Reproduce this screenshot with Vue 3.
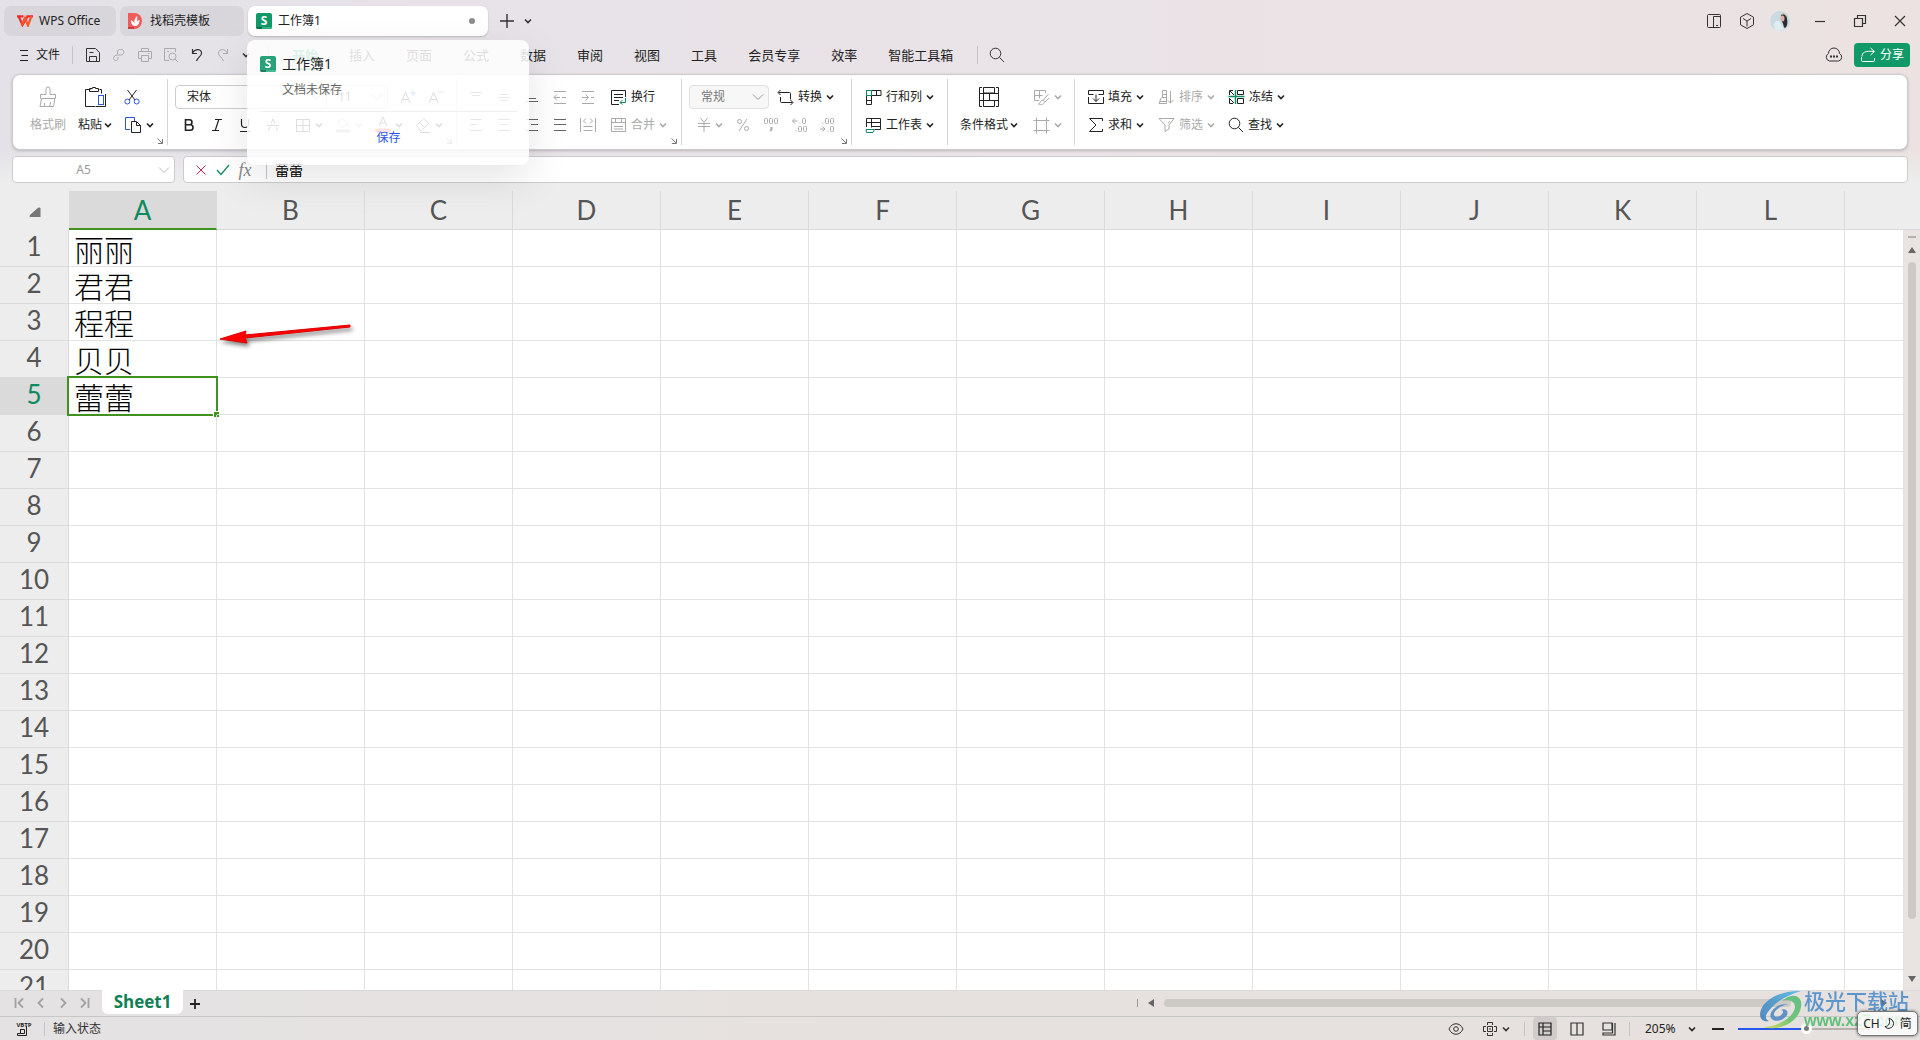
<script setup>
import { h } from 'vue'

const icons = {
  chev: [8, 8, '<path d="M1 2.5l3 3 3-3" stroke-width="1.6"/>'],
  arrow: [12, 8, '<path d="M1 1.5l5 5 5-5"/>'],
  launch: [6, 6, '<path d="M.5 .5l4.5 4.5M5.500 1v4.500H1"/>'],
  plus: [14, 14, '<path d="M7 0v14M0 7h14" stroke-width="1.4"/>'],
  wps: [16, 12, '<path d="M0 1.300h6.500M9.500 1.300H16M1.500 1l4 9L10.500 1.500" stroke="#ee2a2c" stroke-width="2.200"/><path d="M4.500 10.500L8 3l3 7.500L14.500 1" stroke="#f9562b" stroke-width="2.200"/>'],
  docer: [14, 16, '<path d="M0 0h6.500a7.500 8 0 0 1 0 16H0z" fill="#f15b5b" stroke="none"/><path d="M0 14h6v2H0z" fill="#c93c44" stroke="none"/><path d="M7 13c-3 0-4-3-4-6 2 1 3 2 3.500 3.500C6 7 7 5 9 3c.5 2 .5 3.500-.5 6C9.500 7.500 10.500 7 11.500 7c0 4-2 6-4.500 6z" fill="#fff" stroke="none"/>'],
  sheet: [16, 16, '<rect x="0" y="0" width="16" height="16" rx="2" fill="#12996a" stroke="none"/><path d="M0 14h6v2H2a2 2 0 0 1-2-2z" fill="#0a6e4b" stroke="none"/><path d="M6 14h10a2 2 0 0 1-2 2H6z" fill="#35b084" stroke="none"/><text x="8" y="12" text-anchor="middle" font-size="12" font-weight="700" font-family="Open Sans, sans-serif" fill="#fff" stroke="none">S</text>'],
  split: [16, 16, '<rect x="1.500" y="1.500" width="13" height="13" rx="1"/><path d="M7.500 14.500v-11h7M10 12.500h2"/>'],
  cube: [16, 16, '<path d="M8 .5l6.500 3.700v7.600L8 15.500l-6.500-3.700V4.200zM4 5.500L8 8l4-2.500M8 8v5.500"/>'],
  min: [12, 12, '<path d="M1 6.500h10" stroke-width="1.200"/>'],
  restore: [14, 14, '<path d="M1.500 4.500h8v8h-8zM4.500 4V1.500h8v8H10" stroke-width="1.200"/>'],
  close: [12, 12, '<path d="M1 1l10 10M11 1L1 11" stroke-width="1.200"/>'],
  burger: [10, 12, '<path d="M0 1.500h8M1.500 6.500H8M0 11.500h8"/>'],
  save: [16, 16, '<path d="M1.500 1.500h9l4 4v9h-13zM4.500 14V9.500h7V14M4.500 5.500h4"/>'],
  link: [14, 14, '<path d="M5.500 6V4a2.500 2.500 0 0 1 3-2.500c4-.5 4.500 4.500 1 5.500H5.500C3 7 1.500 8.500 1.500 10.500c.5 3 4.500 2.500 4.500 0V9"/>'],
  print: [16, 16, '<path d="M4.500 4.500v-3h7v3M4 11.500H1.500v-7h13v7H12M4.500 8.500h7v6h-7zM11 6.500h1.500"/>'],
  preview: [16, 16, '<path d="M6 13.500H1.500v-12h11V5M4 4.500h2"/><circle cx="9.500" cy="9.500" r="3.500"/><path d="M12 12l3 3"/>'],
  undo: [14, 14, '<path d="M2.500 1v4.500H7M2.500 5C5.500 0 12 1 11.500 5.500 11 8.500 8 9 6.500 13" stroke-width="1.200"/>'],
  redo: [14, 14, '<path d="M11.500 1v4.500H7M11.500 5C8.500 0 2 1 2.500 5.500 3 8.500 6 9 7.500 13"/>'],
  search: [16, 16, '<circle cx="6.500" cy="6.500" r="5.300"/><path d="M10.500 10.500l4.500 4.500"/>'],
  cloud: [18, 16, '<path d="M4.500 14a4 4 0 0 1-1-7.500 5.500 5.500 0 0 1 11 0 4 4 0 0 1-1 7.500z"/><path d="M5 9.500h2M8 9.500h2M11 9.500h2" stroke-width="2"/>'],
  share: [16, 16, '<path d="M1.500 10v3.500q0 1 1 1h11q1 0 1-1V11M2 9.500c0-4 3-6 12-5M10.500 1l4 3.500-4 3.500"/>'],
  brush: [20, 22, '<path d="M8 8.500V3a2 2 0 0 1 4 0v5.500h5.500v4h-15v-4H8M3.500 12.500L2 20.500h13.500q1-3 1-8M6.500 20v-3M11.500 20q1-1 1-4"/>'],
  paste: [22, 22, '<path d="M6.500 3.500h-5v17h10M15.500 3.500h2v4M5.500 5.500v-3h3v-1h3v1h3v3z"/><rect x="14.500" y="9.500" width="5" height="9" stroke="#2a56d8"/><path d="M12 20.500h9.500V8"/>'],
  cut: [16, 16, '<path d="M3.500 1l7.500 10M12.500 1L5 11"/><circle cx="3.300" cy="12.500" r="2.500" stroke="#2a56d8"/><circle cx="12.700" cy="12.500" r="2.500" stroke="#2a56d8"/>'],
  copy: [18, 18, '<path d="M6 13.500H1.500v-12h9V5" stroke="#2a56d8"/><path d="M7.500 5.500h5l4 4v7h-9zM12.500 6v3.500h4"/>'],
  bold: [14, 16, '<path d="M3.500 2.800h4a2.400 2.400 0 0 1 0 4.900h-4zM3.500 7.700h4.800a2.700 2.700 0 0 1 0 5.500H3.500z" stroke-width="1.600"/>'],
  italic: [14, 16, '<path d="M5 2.500h7M2 13.500h7M8.800 2.500L5.200 13.500" stroke-width="1.200"/>'],
  under: [14, 16, '<path d="M3.500 2v5a3.500 3.500 0 0 0 7 0V2M2 14.500h10" stroke-width="1.200"/>'],
  strike: [14, 16, '<path d="M1 8.500h12M5 6.500L7 2l2 4.500M4 10l-1.500 3.500M10 10l1.500 3.500"/>'],
  border: [16, 16, '<path d="M1.500 2.500h13v12h-13zM8 2.500v12M1.500 8.500h13"/>'],
  fill: [16, 16, '<path d="M7 1.500l5.500 5-5.500 4-4-4zM13 6v4"/><path d="M1 14h14" stroke-width="3"/>'],
  fcolor: [16, 18, '<path d="M4 10L8 1l4 9M5.500 7h5"/><path d="M2 14.500h12" stroke="#e8403c" stroke-width="4" stroke-linecap="round"/>'],
  eraser: [16, 16, '<path d="M1.500 8.500l7-7 5 5-7 7h-1.500zM4.500 5.500l5 5M5 15.500h10"/>'],
  aplus: [18, 16, '<path d="M2 14L6.500 3 11 14M3.500 10.500h6"/><path d="M11 4h6M14 1v6" stroke="#2a56d8"/>'],
  aminus: [18, 16, '<path d="M2 14L6.500 3 11 14M3.500 10.500h6"/><path d="M11 3h6" stroke="#2a56d8"/>'],
  top: [14, 14, '<path d="M1 2.500h12M3 5.500h8"/>'],
  mid: [14, 14, '<path d="M3 4.500h8M1 7.500h12M3 10.500h8"/>'],
  bot: [14, 14, '<path d="M3 8.500h8M1 11.500h12"/>'],
  left: [14, 14, '<path d="M1 1.500h12M1 6.500h7M1 12.500h12"/>'],
  center: [14, 14, '<path d="M1 1.500h12M3 6.500h8M1 12.500h12"/>'],
  right: [14, 14, '<path d="M1 1.500h12M6 6.500h7M1 12.500h12"/>'],
  just: [14, 14, '<path d="M1 1.500h12M1 6.500h12M1 12.500h12"/>'],
  outdent: [14, 14, '<path d="M1 1.500h12M9 7.500h4M1 13.500h12M1 7.500h6M4 4.500l-3 3 3 3"/>'],
  indent: [14, 14, '<path d="M1 1.500h12M10 7.500h3M1 13.500h12M1 7.500h6M4.500 4.500l3 3-3 3"/>'],
  distr: [16, 16, '<path d="M.5 1v14M15.500 1v14M3.500 9.500h9M3.500 13.500h9M6 1.500L3.500 4 6 6.500M10 1.500L12.500 4 10 6.500"/>'],
  wrap: [17, 16, '<path d="M9 15.500H1.500V1.500h14V8M4 5.500h9M4 8.500h9M4 11.500h5"/><path d="M15.500 9v4.500h-5M12.500 11l-2.500 2.500 2.500 2" stroke="#0f8a5f"/>'],
  merge: [17, 16, '<path d="M1.500 1.500h14v13h-14zM1.500 5.500h14M5.500 1.500v4M11.500 1.500v4M4 9.500h9M4 12h9"/>'],
  yen: [14, 16, '<path d="M3.500 1L7 5.500 10.500 1M1 6.500h12M1 9.500h12M7 6v9"/>'],
  pct: [14, 16, '<circle cx="3.500" cy="4.500" r="2"/><circle cx="10.500" cy="11.500" r="2"/><path d="M11 2L3 14"/>'],
  thou: [16, 16, '<rect x="1.500" y="1.500" width="3" height="5" rx="1"/><rect x="6.500" y="1.500" width="3" height="5" rx="1"/><rect x="11.500" y="1.500" width="3" height="5" rx="1"/><path d="M8.500 10v2l-1 2" stroke-width="2"/>'],
  deca: [16, 16, '<path d="M1.500 4h5M4 1.500L1.500 4 4 6.500M8.500 6h1M4.500 14h1"/><rect x="11.500" y="1.500" width="3" height="5" rx="1"/><rect x="7.500" y="9.500" width="3" height="5" rx="1"/><rect x="12.500" y="9.500" width="3" height="5" rx="1"/>'],
  decb: [16, 16, '<path d="M1 12h5M3.500 9.500L6 12l-2.500 2.500M8.500 14h1M3.500 6h1"/><rect x="11.500" y="9.500" width="3" height="5" rx="1"/><rect x="6.500" y="1.500" width="3" height="5" rx="1"/><rect x="11.500" y="1.500" width="3" height="5" rx="1"/>'],
  conv: [17, 16, '<path d="M1.500 3.500h11q1 0 1 1v6M15.500 13.500h-11q-1 0-1-1V8M3.500 1L1 3.500 3.500 6M13.500 11l2.500 2.500-2.500 2.500"/>'],
  rowcol: [17, 17, '<path d="M1.500 6.500v9h5v-9M1.500 11.500h5M7 1.500h9v5H7M11.500 1.500v5"/><rect x="1.500" y="1.500" width="5" height="5" stroke="#0f8a5f"/>'],
  wsheet: [17, 17, '<path d="M1.500 10V1.500h14v11H10M1.500 5.500h14M6.500 1.500v9M6.500 9.500h9"/><path d="M1 12.500h8.500l-1.500 3H1.500z" stroke="#0f8a5f"/>'],
  cond: [20, 20, '<path d="M3 .5H.5v19H3M17 .5h2.500v19H17M4.500 .5h11v5.500h-11zM4.500 13.500h11v6h-11zM.5 6.500h19M.5 13.500h19M4.500 .5v19M10.500 6.500v7" stroke-width="1"/>'],
  cstyle: [17, 17, '<path d="M12.500 4V1.500h-11v10H6M1.500 6.500h8M6.500 1.500v8M15.500 5l-5 6M16 9l-4 4M10 11c-3 0-2 3-4.500 4 3 1.500 6 0 6-2.500z"/>'],
  frame: [17, 17, '<path d="M3.500 .5v16M13.500 .5v16M.5 3.500h16M.5 13.500h16"/>'],
  fillc: [16, 16, '<path d="M.5 3.500v-2h15v4h-5M.5 3v2.500h5M.5 8v6.500h15V8M8 5.500v7M5 9.500l3 3 3-3"/>'],
  sum: [16, 16, '<path d="M14.500 4V1.500h-13L8 8l-6.500 6.500h13V12"/>'],
  sort: [17, 16, '<path d="M4.500 8.500v-7h4v13M4 5.500h4M3.500 8.500h5M3 9l-2 5.500h7.500M2 12.500h6M12.500 2v12M10 11.500l2.500 2.500 3-3"/>'],
  filter: [17, 16, '<path d="M1 1.500h15l-5 6.500v4l-4 2.500V8zM12 4l-2 2.500"/>'],
  freeze: [17, 16, '<path d="M5 1.500H1.500v4.500M1.500 9v5.500H5M9.500 5.500v-4h6v4zM9.500 9.500h6v5h-6zM2 2l4 4M2 10l4 4"/><path d="M.5 7.500h16M7.500 1v14" stroke="#0f8a5f" stroke-width="1.400"/>'],
  cross: [12, 12, '<path d="M1.500 1.500l9 9M10.500 1.500l-9 9" stroke="#c7254e"/>'],
  check: [14, 12, '<path d="M1 6l4 4.500L13 1" stroke="#0f8a5f" stroke-width="1.200"/>'],
  corner: [12, 11, '<path d="M11.500 1.500v8.500H1.500q-2-.5 0-2.500L9 .8q2-1 2.500.7z" fill="#777" stroke="none"/>'],
  first: [10, 12, '<path d="M1.500 1v10M9 1.500L4.500 6 9 10.500" stroke-width="1.800"/>'],
  prev: [10, 12, '<path d="M7 1.500L2.500 6 7 10.500" stroke-width="1.800"/>'],
  next: [10, 12, '<path d="M3 1.500L7.500 6 3 10.500" stroke-width="1.800"/>'],
  last: [10, 12, '<path d="M8.500 1v10M1 1.500L5.500 6 1 10.500" stroke-width="1.800"/>'],
  add: [10, 10, '<path d="M5 0v10M0 5h10" stroke-width="1.800"/>'],
  macro: [16, 16, '<text x="8" y="6" text-anchor="middle" font-size="6" font-weight="700" font-family="Open Sans, sans-serif" fill="currentColor" stroke="none">VBTP</text><path d="M4.500 8.500h4v4H1.500v2h9V5M4.500 8v4.500"/>'],
  eye: [16, 14, '<path d="M1 7c3-7 11-7 14 0-3 7-11 7-14 0z"/><circle cx="8" cy="7" r="2.300"/>'],
  target: [16, 16, '<path d="M5.500 4V1.500h5V4M5.500 12v2.500h5V12M4 5.500H1.500v5H4M12 5.500h2.500v5H12M5.500 5.500h5v5h-5zM8 7v2"/>'],
  vnorm: [16, 16, '<path d="M2 2h12v12H2zM2 6h12M6 2v12M6 10h8" stroke-width="1.200"/>'],
  vpage: [16, 16, '<path d="M2 2h12v12H2zM8 2v12" stroke-width="1.200"/>'],
  vbreak: [16, 16, '<path d="M2 2h9v7H2zM14 2v12H2v-2h9.500V2" stroke-width="1.200"/>'],
  tleft: [6, 8, '<path d="M6 0v8L0 4z" fill="#666" stroke="none"/>'],
  tright: [6, 8, '<path d="M0 0v8l6-4z" fill="#666" stroke="none"/>'],
  tup: [8, 6, '<path d="M0 6h8L4 0z" fill="#666" stroke="none"/>'],
  tdown: [8, 6, '<path d="M0 0h8L4 6z" fill="#666" stroke="none"/>'],
  moon: [12, 14, '<path d="M5 1.500c5 1 6 6 2.500 9C5 12 2 11.500 1 9.500 5 9.500 6.500 5.500 5 1.500z"/>']
}

const Icon = (p) => {
  const [w, hh, body] = icons[p.name]
  return h('svg', {
    width: w, height: hh, viewBox: `0 0 ${w} ${hh}`, fill: 'none',
    stroke: 'currentColor', 'aria-hidden': 'true', innerHTML: body,
    style: { flex: 'none', display: 'block' }
  })
}
Icon.props = ['name']

const menus = ['开始', '插入', '页面', '公式', '数据', '审阅', '视图', '工具', '会员专享', '效率', '智能工具箱']
const cols = 'ABCDEFGHIJKL'.split('')
const names = ['丽丽', '君君', '程程', '贝贝', '蕾蕾']
</script>

<template>
  <div class="app">
    <header class="titlebar">
      <button class="tab home"><Icon name="wps" />WPS Office</button>
      <button class="tab docer"><Icon name="docer" />找稻壳模板</button>
      <button class="tab current"><Icon name="sheet" />工作簿1<span class="dot"></span></button>
      <button class="icon-btn newtab" aria-label="新建"><Icon name="plus" /></button>
      <button class="icon-btn slim" aria-label="标签列表"><Icon name="chev" /></button>
      <div class="window">
        <button class="icon-btn w32" aria-label="分屏"><Icon name="split" /></button>
        <button class="icon-btn w32" aria-label="应用"><Icon name="cube" /></button>
        <button class="icon-btn w32" aria-label="账号">
          <svg width="20" height="20" viewBox="0 0 20 20"><circle cx="10" cy="10" r="10" fill="#c9dbe0" /><path d="M5 19c-2-5-1-10 4-9l5 8a10 10 0 0 1-9 1z" fill="#dfedf0" /><path d="M11 4c3-2 6 0 6 4 1 4 0 8-2 9-2-1-1-4-3-6z" fill="#2e2a33" /><ellipse cx="12.500" cy="7.500" rx="2" ry="3" fill="#dcb0a4" /><path d="M11 4.500c1-2 4-2 5 1" stroke="#b79a62" fill="none" /></svg>
        </button>
        <button class="icon-btn w40" aria-label="最小化"><Icon name="min" /></button>
        <button class="icon-btn w40" aria-label="还原"><Icon name="restore" /></button>
        <button class="icon-btn w40" aria-label="关闭"><Icon name="close" /></button>
      </div>
    </header>

    <nav class="menubar">
      <button class="file"><Icon name="burger" />文件</button>
      <span class="bar"></span>
      <div class="quick">
        <button class="icon-btn" aria-label="保存"><Icon name="save" /></button>
        <button class="icon-btn off" aria-label="输出"><Icon name="link" /></button>
        <button class="icon-btn off" aria-label="打印"><Icon name="print" /></button>
        <button class="icon-btn off" aria-label="预览"><Icon name="preview" /></button>
        <button class="icon-btn" aria-label="撤销"><Icon name="undo" /></button>
        <button class="icon-btn off" aria-label="恢复"><Icon name="redo" /></button>
        <button class="icon-btn slim" aria-label="更多"><Icon name="chev" /></button>
      </div>
      <span class="bar"></span>
      <div class="menus">
        <button v-for="(m, i) in menus" :key="m" :class="{ active: i === 0 }">{{ m }}</button>
      </div>
      <span class="bar"></span>
      <button class="icon-btn find" aria-label="搜索"><Icon name="search" /></button>
      <button class="icon-btn cloud" aria-label="云同步"><Icon name="cloud" /></button>
      <button class="share"><Icon name="share" />分享</button>
    </nav>

    <section class="ribbon">
      <div class="group g-clip">
        <button class="big off"><span class="pic"><Icon name="brush" /></span><span>格式刷</span></button>
        <button class="big"><span class="pic"><Icon name="paste" /></span><span>粘贴<Icon name="chev" /></span></button>
        <div class="rows">
          <div class="row"><button class="btn" aria-label="剪切"><Icon name="cut" /></button></div>
          <div class="row"><button class="btn" aria-label="复制"><Icon name="copy" /><Icon name="chev" /></button></div>
        </div>
        <span class="launch"><Icon name="launch" /></span>
      </div>

      <div class="group g-font">
        <div class="rows">
          <div class="row">
            <button class="combo family">宋体<Icon name="arrow" /></button>
            <button class="combo size">11<Icon name="arrow" /></button>
            <span class="sp"></span>
            <button class="sq" aria-label="增大字号"><Icon name="aplus" /></button>
            <button class="sq" aria-label="减小字号"><Icon name="aminus" /></button>
          </div>
          <div class="row">
            <button class="sq" aria-label="加粗"><Icon name="bold" /></button>
            <button class="sq" aria-label="倾斜"><Icon name="italic" /></button>
            <button class="sq" aria-label="下划线"><Icon name="under" /></button>
            <button class="sq" aria-label="删除线"><Icon name="strike" /></button>
            <button class="btn w40" aria-label="边框"><Icon name="border" /><Icon name="chev" /></button>
            <button class="btn w40 off" aria-label="填充颜色"><Icon name="fill" /><Icon name="chev" /></button>
            <button class="btn w40" aria-label="字体颜色"><Icon name="fcolor" /><Icon name="chev" /></button>
            <button class="btn w40" aria-label="清除"><Icon name="eraser" /><Icon name="chev" /></button>
          </div>
        </div>
        <span class="launch"><Icon name="launch" /></span>
      </div>

      <div class="group g-align">
        <div class="rows">
          <div class="row">
            <button v-for="n in ['top', 'mid', 'bot']" :key="n" class="sq dim" :aria-label="n"><Icon :name="n" /></button>
            <button v-for="n in ['outdent', 'indent']" :key="n" class="sq off" :aria-label="n"><Icon :name="n" /></button>
            <button class="btn"><Icon name="wrap" />换行</button>
          </div>
          <div class="row">
            <button v-for="n in ['left', 'center', 'right', 'just']" :key="n" class="sq dim" :aria-label="n"><Icon :name="n" /></button>
            <button class="sq off" aria-label="分散对齐"><Icon name="distr" /></button>
            <button class="btn off"><Icon name="merge" />合并<Icon name="chev" /></button>
          </div>
        </div>
        <span class="launch"><Icon name="launch" /></span>
      </div>

      <div class="group g-num">
        <div class="rows">
          <div class="row">
            <button class="combo fmt">常规<Icon name="arrow" /></button>
            <button class="btn"><Icon name="conv" />转换<Icon name="chev" /></button>
          </div>
          <div class="row">
            <button class="btn w40 off" aria-label="货币"><Icon name="yen" /><Icon name="chev" /></button>
            <button v-for="n in ['pct', 'thou', 'deca', 'decb']" :key="n" class="sq off" :aria-label="n"><Icon :name="n" /></button>
          </div>
        </div>
        <span class="launch"><Icon name="launch" /></span>
      </div>

      <div class="group g-cells">
        <div class="rows">
          <div class="row"><button class="btn"><Icon name="rowcol" />行和列<Icon name="chev" /></button></div>
          <div class="row"><button class="btn"><Icon name="wsheet" />工作表<Icon name="chev" /></button></div>
        </div>
      </div>

      <div class="group g-cond">
        <button class="big"><span class="pic"><Icon name="cond" /></span><span>条件格式<Icon name="chev" /></span></button>
        <div class="rows">
          <div class="row"><button class="btn off" aria-label="单元格样式"><Icon name="cstyle" /><Icon name="chev" /></button></div>
          <div class="row"><button class="btn off" aria-label="表格样式"><Icon name="frame" /><Icon name="chev" /></button></div>
        </div>
      </div>

      <div class="group g-edit">
        <div class="rows">
          <div class="row">
            <button class="btn w70"><Icon name="fillc" />填充<Icon name="chev" /></button>
            <button class="btn w70 off"><Icon name="sort" />排序<Icon name="chev" /></button>
            <button class="btn w70"><Icon name="freeze" />冻结<Icon name="chev" /></button>
          </div>
          <div class="row">
            <button class="btn w70"><Icon name="sum" />求和<Icon name="chev" /></button>
            <button class="btn w70 off"><Icon name="filter" />筛选<Icon name="chev" /></button>
            <button class="btn w70"><Icon name="search" />查找<Icon name="chev" /></button>
          </div>
        </div>
      </div>
    </section>

    <section class="formula">
      <div class="namebox">
        <input value="A5" aria-label="名称框" />
        <Icon name="arrow" />
      </div>
      <div class="fx">
        <button class="icon-btn" aria-label="取消"><Icon name="cross" /></button>
        <button class="icon-btn" aria-label="输入"><Icon name="check" /></button>
        <button class="icon-btn fn" aria-label="插入函数"><i>fx</i></button>
        <span class="bar"></span>
        <input value="蕾蕾" aria-label="编辑栏" />
      </div>
    </section>

    <main class="grid">
      <table>
        <colgroup>
          <col class="c-head" />
          <col v-for="c in cols" :key="c" class="c-cell" />
          <col />
        </colgroup>
        <thead>
          <tr>
            <th class="all"><Icon name="corner" /></th>
            <th v-for="c in cols" :key="c" :class="{ on: c === 'A' }">{{ c }}</th>
            <th></th>
          </tr>
        </thead>
        <tbody>
          <tr v-for="r in 21" :key="r">
            <th :class="{ on: r === 5 }">{{ r }}</th>
            <td>{{ names[r - 1] }}<span v-if="r === 5" class="select"></span></td>
            <td v-for="c in 12" :key="c"></td>
          </tr>
        </tbody>
      </table>
      <div class="vside">
        <div class="vhead"></div>
        <div class="vbar">
          <span class="dash"></span>
          <Icon name="tup" />
          <span class="vthumb"></span>
          <Icon name="tdown" />
        </div>
      </div>
      <svg class="pointer" width="144" height="44" viewBox="0 0 144 44" aria-hidden="true">
        <path d="M134 7L29 17l1-4L4 21l27 4-2-5L134 9z" fill="#f00" stroke="#d00" stroke-width="1" />
      </svg>
    </main>

    <footer>
      <div class="sheets">
        <div class="nav">
          <button v-for="n in ['first', 'prev', 'next', 'last']" :key="n" :aria-label="n"><Icon :name="n" /></button>
        </div>
        <button class="sheet">Sheet1</button>
        <button class="icon-btn addsheet" aria-label="新建工作表"><Icon name="add" /></button>
        <div class="hbar">
          <span class="grip"></span>
          <Icon name="tleft" />
          <span class="hthumb"></span>
          <Icon name="tright" />
        </div>
      </div>
      <div class="status">
        <Icon name="macro" />
        <span class="bar"></span>
        <span class="state">输入状态</span>
        <button class="icon-btn w48" aria-label="护眼"><Icon name="eye" /></button>
        <button class="icon-btn focus" aria-label="聚光灯"><Icon name="target" /><Icon name="chev" /></button>
        <span class="bar"></span>
        <div class="views">
          <button class="icon-btn on" aria-label="普通视图"><Icon name="vnorm" /></button>
          <button class="icon-btn" aria-label="页面布局"><Icon name="vpage" /></button>
          <button class="icon-btn" aria-label="分页预览"><Icon name="vbreak" /></button>
        </div>
        <span class="bar"></span>
        <button class="zoom">205%<Icon name="chev" /></button>
        <button class="icon-btn minus" aria-label="缩小"><span></span></button>
        <input type="range" min="0" max="100" value="52" aria-label="缩放" />
      </div>
    </footer>

    <aside class="tip">
      <div class="tip-title"><Icon name="sheet" />工作簿1</div>
      <div class="tip-sub">文档未保存</div>
      <a href="#">保存</a>
    </aside>

    <div class="mark">
      <svg width="44" height="42" viewBox="0 0 44 42" aria-hidden="true">
        <defs>
          <linearGradient id="mg" x1="0" y1="1" x2="1" y2="0"><stop offset="0" stop-color="#3d78b8" /><stop offset="1" stop-color="#49b6e4" /></linearGradient>
          <linearGradient id="mh" x1="1" y1="0" x2="0" y2="1"><stop offset="0" stop-color="#4fb878" /><stop offset=".5" stop-color="#5cc069" /><stop offset="1" stop-color="#d3dc48" /></linearGradient>
        </defs>
        <path d="M42 1C22 0 2 10 1 24c0 6 4 8 9 7-4-2-4-5-1-9C15 13 26 6 42 1z" fill="url(#mg)" />
        <path d="M23 11C33 2 44 5 42 17 40 31 22 42 4 37c15 0 31-10 32-20 0-6-6-8-13-6z" fill="url(#mh)" />
        <path d="M29 14c-11-1-20 8-17 14 3 5 13 3 16-3 2-4-2-7-6-5 2 0 3 2 1 4-2 3-7 4-8 1-1-4 6-9 14-11z" fill="#4a86c4" />
      </svg>
      <div><b>极光下载站</b><span>www.xz7.com</span></div>
    </div>
    <div class="ime"><span>CH</span><Icon name="moon" /><span>简</span></div>
  </div>
</template>

<style>
body { overflow: hidden; }
</style>

<style scoped>
* { box-sizing: border-box; }
.app {
  position: relative;
  height: 100vh;
  display: flex;
  flex-direction: column;
  overflow: hidden;
  font: 12px/16px "Noto Sans", "Noto Sans CJK SC", sans-serif;
  color: #222;
  background: linear-gradient(to bottom, transparent 150px, #ededed 184px), linear-gradient(to right, #e4e2e8, #eae3e7 55%, #ebe2e1);
}
button, input {
  font: inherit;
  color: inherit;
  border: 0;
  margin: 0;
  padding: 0;
  background: none;
  outline: none;
}
button { display: flex; align-items: center; white-space: nowrap; }
.icon-btn { justify-content: center; width: 26px; color: #333; }
.icon-btn.slim { width: 20px; }
.icon-btn.w32 { width: 33px; }
.w40 { width: 40px; }
.icon-btn.w48 { width: 48px; }
.off, .icon-btn.off { color: #aaa; }
.dim { color: #666; }
.bar { flex: none; width: 1px; height: 18px; background: #c6c3c8; }

.titlebar { display: flex; flex: none; gap: 4px; height: 38px; padding: 6px 0 2px 4px; }
.tab { height: 30px; border-radius: 7px; background: #d8d6db; gap: 6px; padding: 0 8px; }
.home { width: 112px; padding-left: 13px; }
.docer { width: 124px; gap: 8px; }
.current { width: 240px; background: #fff; box-shadow: 0 1px 2px #bbb; }
.dot { width: 6px; height: 6px; border-radius: 50%; background: #8c8c8c; margin: 0 5px 0 auto; }
.newtab { margin-left: 2px; }
.titlebar .slim { width: 8px; }
.window { display: flex; margin-left: auto; }
.w32 + .w40 { margin-left: 4px; }

.menubar { display: flex; flex: none; align-items: center; height: 34px; padding: 0 10px 0 20px; }
.file { gap: 6px; width: 52px; }
.quick { display: flex; padding: 0 12px 0 7px; }
.menus { display: flex; gap: 31px; margin: 0 24px 0 23px; font-size: 13px; }
.menus button { height: 30px; }
.menus .active { color: #0f9a68; font-weight: 700; box-shadow: inset 0 -2px #0f9a68; }
.find { margin-left: 6px; }
.cloud { margin: 0 7px 0 auto; }
.share { width: 56px; height: 24px; border-radius: 4px; background: #12996a; color: #fff; padding-left: 6px; gap: 4px; }

.ribbon {
  display: flex;
  flex: none;
  height: 76px;
  margin: 2px 12px 0;
  background: #fff;
  border: 1px solid #cdcacd;
  border-radius: 8px;
  box-shadow: 0 1px 3px #bbb5bb;
}
.group { position: relative; display: flex; padding: 8px 0 0; }
.group + .group::before { content: ""; position: absolute; left: -1px; top: 4px; width: 1px; height: 66px; background: #d4d4d4; }
.launch { position: absolute; right: 5px; bottom: 5px; color: #777; }
.g-clip { width: 155px; padding-left: 9px; }
.g-font { width: 289px; padding-left: 7px; }
.g-align { width: 225px; padding-left: 5px; }
.g-num { width: 170px; padding-left: 7px; }
.g-cells { width: 96px; padding-left: 5px; }
.g-cond { width: 127px; padding-left: 5px; }
.g-edit { flex: 1; padding-left: 5px; }
.rows { display: flex; flex-direction: column; }
.row { display: flex; align-items: center; height: 28px; }
.btn { height: 24px; padding-left: 8px; gap: 4px; }
.w70 { width: 70px; }
.sq { width: 28px; height: 24px; justify-content: center; }
.sp { width: 6px; }
.big { flex-direction: column; align-items: center; height: 56px; padding: 0 7px; }
.big span { display: flex; align-items: center; justify-content: center; gap: 2px; height: 28px; }
.g-clip .big { width: 52px; }
.g-clip .big + .big { width: 42px; padding: 0; }
.combo { height: 24px; border: 1px solid #ccc; padding: 0 4px 0 11px; justify-content: space-between; color: #222; }
.combo svg { color: #999; }
.family { width: 152px; border-radius: 4px 0 0 4px; }
.size { width: 62px; margin-left: -1px; border-radius: 0 4px 4px 0; }
.fmt { width: 80px; border-radius: 4px; background: #f7f7f7; border-color: #e0e0e0; color: #777; }

.formula { display: flex; flex: none; gap: 8px; margin: 6px 12px 8px; height: 27px; }
.namebox, .fx { display: flex; align-items: center; background: #fff; border: 1px solid #ccc; border-radius: 4px; }
.namebox { width: 163px; padding-right: 4px; color: #bbb; }
.namebox input { flex: 1; min-width: 0; padding-right: 4px; text-align: center; color: #999; }
.fx { flex: 1; padding-left: 6px; }
.fx .icon-btn { width: 22px; }
.fx .fn { font: 18px/20px "Liberation Serif", serif; color: #888; }
.fx .bar { margin: 0 8px 0 10px; }
.fx input { flex: 1; height: 23px; padding-bottom: 2px; font-size: 14px; color: #000; }

.grid { position: relative; display: flex; flex: 1 1 0; min-height: 0; overflow: hidden; background: #fff; align-items: stretch; }
table { flex: 1; width: 0; height: 0; table-layout: fixed; border-collapse: separate; border-spacing: 0; align-self: flex-start; }
.c-head { width: 69px; }
.c-cell { width: 148px; }
th, td { height: 37px; padding: 0; border: 0 solid #e2e2e2; border-width: 0 1px 1px 0; line-height: 30px; }
th { font: 26px/30px Lato, sans-serif; color: #555; background: #ededed; border-color: #dadada; text-align: center; vertical-align: top; }
thead th { height: 39px; vertical-align: middle; }
thead th:last-child { border-right: 0; }
.all { border: 0; }
.all svg { margin: 4px 0 0 29px; }
tbody th { padding-top: 1px; }
td { position: relative; font-size: 30px; font-weight: 300; color: #000; padding: 4px 0 0 5px; white-space: nowrap; }
.on { color: #0f8a5f; background: #dadada; }
thead .on { border-bottom: 2px solid #3f921f; }
.select { position: absolute; inset: -2px -2px -2px -2px; border: 2px solid #3f921f; }
.select::after { content: ""; position: absolute; right: -3px; bottom: -3px; width: 5px; height: 5px; background: #3f921f; box-shadow: 0 0 0 1px #fff; }
.vside { display: flex; flex-direction: column; width: 16px; background: #e9e4e2; }
.vhead { height: 39px; background: #ededed; border-bottom: 1px solid #dadada; }
.vbar { flex: 1; display: flex; flex-direction: column; align-items: center; padding: 6px 0 8px; gap: 9px; }
.dash { width: 8px; height: 2px; background: #b5b1af; }
.vthumb { width: 8px; flex: 1; margin-bottom: 48px; border-radius: 4px; background: #cdc9c7; }
.pointer { position: absolute; left: 216px; top: 127px; filter: drop-shadow(2px 3px 2px rgba(0, 0, 0, .5)); }

footer { flex: none; background: linear-gradient(to right, #e4e2e3, #e6e1de 50%); }
.sheets { display: flex; height: 27px; border: 0 solid #c9c6c6; border-width: 0 0 1px; box-shadow: inset 0 1px #dadada; }
.nav { display: flex; align-items: center; width: 102px; padding-left: 8px; color: #a3a1a2; }
.nav button { width: 22px; height: 20px; justify-content: center; }
.sheet { width: 81px; height: 24px; justify-content: center; background: #fff; border-radius: 0 0 6px 6px; font: 700 17px/24px "Open Sans", sans-serif; color: #0f8053; }
.addsheet { width: 24px; height: 27px; color: #222; }
.hbar { display: flex; align-items: center; margin-left: auto; width: 41%; padding: 0 33px 0 4px; gap: 10px; }
.grip { width: 1px; height: 8px; background: #999; }
.hthumb { flex: 1; height: 8px; margin-right: 80px; border-radius: 4px; background: #cdc9c5; }
.status { display: flex; align-items: center; height: 23px; padding: 0 50px 0 16px; }
.status .bar { height: 14px; margin: 0 8px 0 12px; }
.state { margin-right: auto; color: #333; }
.status .focus { width: 32px; gap: 4px; }
.views { display: flex; gap: 8px; margin-right: -4px; }
.views button { width: 24px; height: 23px; border-radius: 4px; }
.views .on { background: #d1ccc9; color: #222; }
.zoom { gap: 12px; width: 66px; margin-left: 7px; }
.minus span { width: 12px; height: 2px; background: #222; }
.minus { width: 14px; margin-right: 13px; }
input[type="range"] {
  appearance: none;
  width: 132px;
  height: 12px;
  background: linear-gradient(to right, #2457ea 50%, #b5b1af 50%) center / 100% 2px no-repeat;
}
input[type="range"]::-webkit-slider-thumb { appearance: none; width: 11px; height: 11px; border-radius: 50%; border: 3px solid #fff; background: #777; }

.tip {
  position: absolute;
  left: 247px;
  top: 40px;
  width: 282px;
  height: 125px;
  padding: 15px 12px 0 13px;
  border-radius: 8px;
  background: rgba(255, 255, 255, .85);
  box-shadow: 0 14px 40px rgba(0, 0, 0, .1);
}
.tip-title { display: flex; align-items: center; gap: 6px; height: 18px; font-size: 14px; }
.tip-title svg { opacity: .9; }
.tip-sub { margin: 9px 0 13px 22px; color: #666; }
.tip a { display: block; border-top: 1px solid #efefef; padding-top: 18px; text-align: center; text-decoration: none; color: #2a56e8; }

.mark { position: absolute; right: 11px; bottom: 8px; display: flex; gap: 1px; opacity: .85; }
.mark b { display: block; font-size: 21px; line-height: 22px; font-weight: 500; color: #4489cb; }
.mark span { display: block; font: 700 16px/18px "Liberation Sans", sans-serif; color: #4aba6c; }
.ime {
  position: absolute;
  right: 2px;
  bottom: 4px;
  display: flex;
  align-items: center;
  justify-content: center;
  gap: 4px;
  width: 61px;
  height: 25px;
  border: 1px solid #777;
  border-radius: 5px;
  background: rgba(255, 255, 255, .8);
  box-shadow: 0 0 3px rgba(0, 0, 0, .6);
  color: #222;
}
</style>
